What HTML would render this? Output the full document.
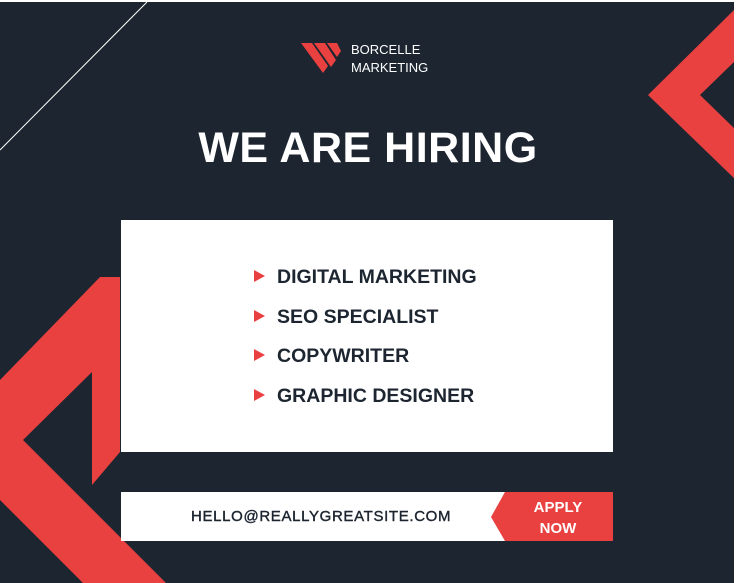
<!DOCTYPE html>
<html><head><style>
body{margin:0;width:736px;height:583px;overflow:hidden;background:#fff;}
.c{position:absolute;left:0;top:0;width:734px;height:581px;background:#1c2530;overflow:hidden;top:2px;}
.t{position:absolute;font-family:"Liberation Sans",sans-serif;font-weight:bold;white-space:nowrap;}
</style></head><body>
<div class="c">
<svg width="736" height="583" style="position:absolute;left:0;top:-2px">
<line x1="0" y1="150" x2="147" y2="2" stroke="#fff" stroke-width="1"/>
<polygon fill="#e94040" points="120,277 120,452 92,485 92,372 23,440 166,583 83,583 0,500 0,380 100,277"/>
<polygon fill="#e94040" points="736,8 736,60 700,95 736,130 736,180 648,95"/>
<rect x="121" y="220" width="492" height="232" fill="#fff"/>
<rect x="121" y="492" width="492" height="49" fill="#fff"/>
<polygon fill="#e94040" points="505,492 613,492 613,541 505,541 491,517"/>
<g fill="#e94040">
<polygon points="301,43 312,43 328,66 323,73"/>
<polygon points="314,43 325,43 336,60 331,67"/>
<polygon points="327,43 337,43 341,51 337,57"/>
</g>
<g fill="#e94040">
<polygon points="254,270 265,276 254,282"/>
<polygon points="254,310 265,316 254,322"/>
<polygon points="254,349 265,355 254,361"/>
<polygon points="254,389 265,395 254,401"/>
</g>
</svg>
<div class="t" style="left:351px;top:39px;color:#fff;font-size:13px;font-weight:normal;line-height:18px">BORCELLE<br>MARKETING</div>
<div class="t" style="left:0;width:736px;text-align:center;top:122px;color:#fff;font-size:43px;letter-spacing:0.5px">WE ARE HIRING</div>
<div class="t" style="left:277px;top:265px;color:#1c2530;font-size:19.5px;line-height:20px">DIGITAL MARKETING</div>
<div class="t" style="left:277px;top:305px;color:#1c2530;font-size:19.5px;line-height:20px">SEO SPECIALIST</div>
<div class="t" style="left:277px;top:344px;color:#1c2530;font-size:19.5px;line-height:20px">COPYWRITER</div>
<div class="t" style="left:277px;top:384px;color:#1c2530;font-size:19.5px;line-height:20px">GRAPHIC DESIGNER</div>
<div class="t" style="left:191px;top:506px;color:#1c2530;font-size:15px;font-weight:normal;letter-spacing:0.65px;-webkit-text-stroke:0.4px #1c2530">HELLO@REALLYGREATSITE.COM</div>
<div class="t" style="left:515px;width:86px;text-align:center;top:495px;color:#fff;font-size:15px;line-height:21px">APPLY<br>NOW</div>
</div>
</body></html>
